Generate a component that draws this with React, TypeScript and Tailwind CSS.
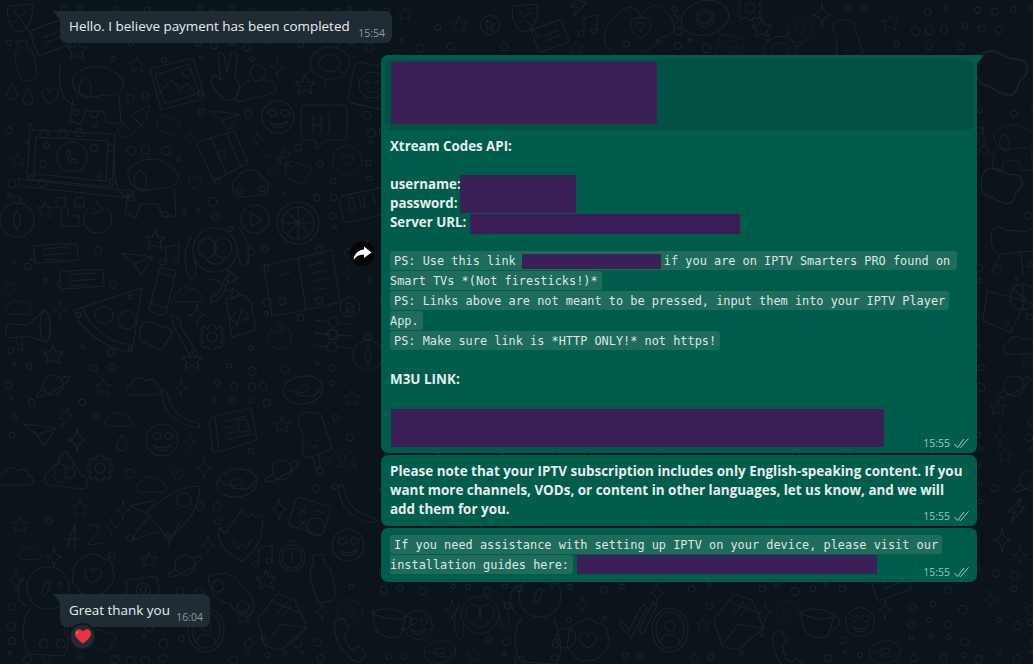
import React from 'react'

type DoodleKind = keyof typeof shapes

const shapes = {
  star: <path d="M0-10 3-3 10-3 5 2 7 9 0 5-7 9-5 2-10-3-3-3Z" />,
  heart: <path d="M0 8C-10 1-10-7-4-7-2-7-1-6 0-3 1-6 2-7 4-7 10-7 10 1 0 8Z" />,
  spark: <path d="M0-12C1-4 3-1 9 0 3 1 1 4 0 12-1 4-3 1-9 0-3-1-1-4 0-12Z" />,
  cloud: <path d="M-13 8C-21 8-21-3-13-3-12-11-2-11 0-6 4-10 12-7 11-1 18 0 17 8 10 8Z" />,
  drop: <path d="M0-8C4-2 5 1 5 3 5 9-5 9-5 3-5 1-4-2 0-8Z" />,
  bolt: <path d="M5-12-8 2-1 2-5 12 9-3 2-3Z" />,
  face: (
    <>
      <circle r="16" />
      <path d="M-9-3C-12-7-6-9-5-6-3-9 1-6-2-2L-6 0ZM3-3C1-7 6-9 7-6 10-8 13-5 10-2L6 0ZM-8 5C-3 9 4 9 9 4 8 13-6 13-8 5Z" />
    </>
  ),
  planet: (
    <>
      <circle r="10" />
      <path d="M-9 4C-17 8-19 12-15 12-10 12 12 2 16-6 18-10 14-10 9-7" />
    </>
  ),
  donut: (
    <>
      <ellipse rx="20" ry="14" transform="rotate(-8)" />
      <ellipse rx="6" ry="3.5" cy="-1" transform="rotate(-8)" />
      <path d="M-17-2C-13 3-9 0-5 4-1 8 4 4 8 6 12 7 15 2 19-3" />
    </>
  ),
  chat: (
    <>
      <path d="M-23-8-22 9-3 8 21 6 20-10-1-10ZM-23 0-27 6-22 7" />
      <path d="M-14-5 12-7M-14 1 12-1M-12 6 4 5" />
    </>
  ),
  laptop: (
    <>
      <path d="M-40-35-43 14 42 22 45-31 Z" />
      <path d="M-34-28-36 9 36 16 38-24Z" />
      <path d="M-52 14-50 21 60 33 64 26 42 24-43 15Z" />
      <circle cx="2" cy="-8" r="15" />
      <path d="M-4-12C-3-4 2 0 8-3L5-6 3-5C0-6-1-8-1-11L1-12-1-15Z" />
    </>
  ),
  dog: (
    <>
      <path d="M-35-20C-38 10-28 18-20 20M-22 -6C-16-20 10-25 25-8 34 0 25 12 8 10-12 16-24 6-22-6Z" />
      <path d="M-10-8C-18-4-18 12-8 14-2 12-2-4-10-8ZM-22 14-25 36-14 40-10 26 8 26 12 38 26 38 24 10" />
    </>
  ),
  frame: (
    <>
      <path d="M-25-15 18-26 30 14-14 26ZM-20-9 14-20 24 9-10 20Z" />
      <path d="M-16 10-4-4 6 5 12-1 20 8" />
      <circle cx="12" cy="-11" r="4" />
    </>
  ),
  peace: <path d="M-8 10C-16 2-16-4-10-7L-4-2-7-26C-7-30-2-30-1-26L2-10 6-28C8-31 13-29 12-24L10-4C17 2 15 14 8 18 2 20-4 16-8 10Z" />,
  person: (
    <>
      <circle cy="-12" r="8" />
      <path d="M-8-5C-22 2-24 14-20 17L16 8C22 2 14-5 7-5" />
    </>
  ),
  turtle: (
    <>
      <ellipse rx="21" ry="17" />
      <ellipse rx="11" ry="9" />
      <path d="M-20 8-28 12M21-5 30-8M-4 17-6 26M8-16 12-24M-9-7-17-13M9 7 16 13" />
    </>
  ),
  square: (
    <>
      <rect x="-21" y="-20" width="42" height="42" rx="6" transform="rotate(12)" />
      <circle r="13" />
      <path d="M-7-4-2-2M3-2 8-4M-6 4C-2 9 5 9 8 3" />
    </>
  ),
  play: (
    <>
      <circle r="14" />
      <path d="M-5-7 7 1-4 7Z" />
    </>
  ),
  bubble: (
    <>
      <path d="M-21-20 21-20C24-20 24 15 21 15L1 15-8 25-9 15-21 15C-24 15-24-20-21-20Z" />
      <path d="M-11-8-11 8M-3-8-3 8M-11 0-3 0M5-8 5 8M5-13 5-11" />
    </>
  ),
  pencil: <path d="M-22 8-4-10 15-20 10-2-10 18C-18 20-24 14-22 8ZM-16 2-3 14M-6-7 7 6" />,
  bottle: <path d="M-6-24 5-26 7-16C11-14 13-10 14-6L18 16C18 20 4 24 0 22-2 20-8-2-8-6-8-10-6-14-4-16Z" />,
  monkey: (
    <>
      <circle r="22" />
      <ellipse cx="-8" cy="-2" rx="9" ry="10" />
      <ellipse cx="8" cy="-2" rx="9" ry="10" />
      <path d="M-8 10C-2 16 6 16 10 8M-24-14C-32 0-32 22-24 28-16 30-20 10-20 8M24-22C36-8 36 12 30 16 22 18 26 0 18-12" />
    </>
  ),
  map: (
    <>
      <path d="M-26-12 12-24 26 8-8 26Z" />
      <path d="M-11-18 4 19M5-21 19 12" />
      <circle r="4" />
    </>
  ),
  car: (
    <>
      <path d="M-16 8-18-4C-16-8-14-8-12-9-10-20 10-20 12-9 18-8 19-2 17 7L6 9-8 10Z" />
      <circle cx="-10" cy="4" r="3" />
      <circle cx="12" cy="2" r="3" />
    </>
  ),
  clock: (
    <>
      <rect x="-21" y="-13" width="46" height="27" rx="5" transform="rotate(-12)" />
      <path d="M-14-7-12 7-7 6-9-8ZM-3-9-1 3 3 3 2-10M10-12 14 0" />
    </>
  ),
  lime: (
    <>
      <circle r="21" />
      <circle r="16" />
      <path d="M0-14V14M-14 0H14M-10-10 10 10M10-10-10 10" />
    </>
  ),
  book: (
    <>
      <path d="M-36-14-2-22 32-30 40 22 6 30-28 36Z" />
      <path d="M-2-22 6 30M8-14 24-18M10-6 26-10M12 2 28-2M14 10 26 8M-22-4-10-7" />
    </>
  ),
  compass: (
    <>
      <circle r="17" />
      <path d="M0-10 4 0 0 10-4 0Z" />
      <circle cy="-20" r="4" />
    </>
  ),
  qr: <path d="M-14-14H-5V-5H-14ZM5-14H14V-5H5ZM-9-4V14H9V4H-2V-4" />,
  refresh: <path d="M-10-7C-19 3-12 16 0 16 12 16 18 3 10-7M-3-17 5-7-6-3" />,
  music: <path d="M-6 8V-7L7-10V6M-6 8C-6 12-13 12-12 8-11 5-7 5-6 8ZM7 6C7 9 1 10 1 6 1 3 6 3 7 6Z" />,
  plane: <path d="M-16-8 16-4 4 14-3 3Z M-3 3 16-4" />,
  tube: <path d="M-2-24 14-20 4 22C0 26-12 22-13 18ZM-3-18 12-14M-12 12 3 17" />,
  arrows: <path d="M-14 12C-2 10-4-6 4-10L3-15 13-7 4-2 3-6C1 2 0 14-14 18ZM-16-6C-6-6-2-2 0 2M2 4 8 8 7 3 15 8 7 14 7 10" />,
  file: <path d="M-12-18 6-22 13-15 18 13-6 20ZM-3-4-8 2-1 6M7-6 11 0 4 4M4-9-1 9" />,
  pizza: (
    <>
      <path d="M-36-10 32-32 22 32C-4 30-30 10-36-10ZM-28-13C-22 4-2 22 16 24" />
      <circle cx="-6" cy="-5" r="9" />
      <circle cx="17" cy="0" r="9" />
    </>
  ),
  mega: (
    <>
      <path d="M-20-6-2-5 14-20C20-22 24 10 16 12L-2 6-20 8C-26 6-26-4-20-6ZM-14 8-11 20-7 20-9 7" />
      <ellipse cx="15" cy="-4" rx="5" ry="15" />
    </>
  ),
  blob: <path d="M-14-12C-6-16-2-8 6-8 14-8 16 0 10 4 6 8 8 16 0 14-8 12-10 8-14 8-20 6-20-8-14-12Z" />,
  brush: <path d="M-12-20C-4-20-2-12-2-8L14 18C16 24 8 24 6 20L-6-4C-10-6-10-14-12-20Z" />,
  gear: (
    <>
      <circle r="5" />
      <path d="M-3-12H3L4-8 8-10 11-7 9-3 12-2V3L9 4 11 8 8 11 4 9 3 12H-3L-4 9-8 11-11 8-9 4-12 3V-2L-9-3-11-7-8-10-4-8Z" />
    </>
  ),
  cursor: (
    <>
      <circle r="10" />
      <path d="M-4-5 5-1 1 1 4 6 2 7-1 3-3 6Z" />
    </>
  ),
  sliders: (
    <>
      <path d="M-18-8-5-6M6-5 18-4M-18 5-5 7M6 7 18 8" />
      <circle cx="0" cy="-6" r="5" />
      <circle cx="0" cy="7" r="5" />
    </>
  ),
  banana: <path d="M-18-20C-20-2-8 14 18 18 21 16 20 14 14 12-2 8-10-2-14-20Z" />,
  news: (
    <>
      <path d="M-18-14 18-22 24 10-14 22Z M-18-14-24-8-20 22-14 22" />
      <path d="M-10-8 14-14M-9-2 2-4M-8 4 2 2M-7 10 18 4" />
      <rect x="6" y="-8" width="10" height="12" rx="1" transform="rotate(-12)" />
    </>
  ),
  popsicle: <path d="M-12-20C-6-24 8-24 10-18L20 14 0 22-8 22C-12 10-6 2-12-8-14-10-14-16-12-20ZM1 22 4 34 8 32 7 20M-3 8-1 9M5 6 7 5M1 10C1 13 5 13 5 10" />,
  poop: <path d="M-18 10C-24 8-24 0-18-2-18-8-10-10-9-12-8-18-4-22 0-24 0-18 8-16 6-10 12-8 12-2 14 0 22 2 22 12 16 14ZM-12-2A6 6 0 1 0-2-2 6 6 0 1 0-12-2ZM-2-2A5 5 0 1 0 8-2 5 5 0 1 0-2-2Z" />,
  rocket: (
    <>
      <path d="M-12 0C10-18 28-24 40-24 40-10 34 8 14 24L8 28-12 4Z" />
      <circle cx="24" cy="-10" r="7" />
      <path d="M-12 4-30-4-4-10M10 26 8 36 20 12M-12 8C-20 14-24 24-28 30-18 28-12 24-2 22" />
    </>
  ),
  flame: <path d="M0 26C-20 16-26 4-22-8-20-2-16 0-14-4-12-14-4-16 0-26 2-18 8-16 10-22 14-14 18-22 20-20 22-4 18 14 0 26ZM-10 4-4 14 0 8 4 14 10 4" />,
  dice: (
    <>
      <rect x="-18" y="-14" width="36" height="30" rx="4" transform="rotate(18)" />
      <circle cx="6" cy="12" r="9" />
      <path d="M-10-6-4-2M-4-8-10 0M-10 6-4 10M-4 4-10 12M6-4 14-2" />
    </>
  ),
  flower: (
    <>
      <path d="M-6-19C0-24 6-20 10-16 18-18 20-8 20-4 24 4 18 10 14 13 12 20 4 21 0 20-6 24-14 18-15 13-22 10-22 2-19-3-22-10-12-18-6-19Z" />
      <path d="M0 8C-11 2-10-7-4-7-2-7-1-6 0-3 1-6 2-7 4-7 10-7 11 2 0 8Z" />
    </>
  ),
  watch: (
    <>
      <circle r="13" />
      <circle r="10" />
      <path d="M0-5 1 5M-4-17 5-17" />
    </>
  ),
  glasses: (
    <>
      <path d="M-22-18C-12-24 4-22 8-14L20 0C26 8 24 20 16 22 8 20 2 14 0 8-10 8-20 2-22-18Z" />
      <circle cx="-12" cy="-9" r="6" />
      <circle cx="13" cy="12" r="6" />
    </>
  ),
  envelope: (
    <>
      <path d="M-26 0-6-26 12-20 24 8-2 30-18 26ZM-10-18 20-6M-18 26-2 4 24 8" />
      <path d="M-6-6 4-18M0-4 8-14" />
    </>
  ),
  camera: (
    <>
      <rect x="-16" y="-12" width="32" height="26" rx="4" transform="rotate(-8)" />
      <circle r="7" />
      <circle r="3" />
    </>
  ),
  astro: (
    <>
      <circle cy="-22" r="21" />
      <ellipse cx="-2" cy="-22" rx="3" ry="8" transform="rotate(20 -2 -22)" />
      <path d="M-24-32C-32-24-32-10-22-4M-18 0C-28 8-26 40-18 44L16 46C24 36 20 16 14 2" />
      <circle cx="26" cy="20" r="10" />
    </>
  ),
  phone: <path d="M-10-20C-16-16-12 12 10 22 14 22 20 16 18 12L12 6 6 10C0 8-2 0-2-6L2-12-4-22Z" />,
  cup: <path d="M-20-8C-8-14 10-10 14-4L8 16C2 20-12 16-16 10ZM14-4C24-4 20 10 10 10M-20-8C-14-2 8 2 14-4" />,
  profile: (
    <>
      <ellipse rx="18" ry="22" />
      <ellipse rx="14" ry="18" />
      <circle cy="-4" r="5" />
      <path d="M-10 12C-6 2 6 2 10 12" />
    </>
  ),
  checks: <path d="M-14 2-6 12 8-14 12-10-4 20-16 6ZM4 12 18-16 22-12 8 16Z" />,
  chair: <path d="M-24-4C-24-14-14-14-10-10L14-8C20-20 30-16 30-12V10L-14 14C-20 14-24 8-24-4ZM-14 14-24 32M6 12 8 36M18 12 32 32" />,
  lemon: (
    <>
      <path d="M-18-14 20-4 6 28-22 16Z" />
      <circle cx="18" cy="-8" r="13" />
      <path d="M8-16 28 0M18-20V4" />
    </>
  ),
  hands: (
    <>
      <path d="M-36 30C-48 10-28-8-14-16-6-18 2-10 0-4-14-8-12 12 0 18 14 14 18-8 2-4 2-14 14-22 24-16 36-8 42 6 34 14L22 18C16 32 4 30 0 40-10 44-24 42-36 30Z" />
      <path d="M0 10C-6 6-6 0-2 0L0 2 2 0C6 0 6 6 0 10Z" />
    </>
  ),
  eye: (
    <>
      <ellipse rx="24" ry="17" transform="rotate(-14)" />
      <circle r="9" />
      <circle r="6" />
      <path d="M-32-4-26 0-32 8" />
    </>
  ),
  leaf: <path d="M-12-12 12-14C14 0 8 12 0 14-10 12-14 0-12-12ZM-6-8 14 20M0-2 7-6M-2 4-8 3" />,
  note: (
    <>
      <rect x="-15" y="-14" width="32" height="24" rx="2" transform="rotate(-20)" />
      <path d="M-6-2 8-8M-4 3 10-3" />
    </>
  ),
  digits: <path d="M-18 12-10-10-10 14M-20 4-4 4M2-8C10-14 16-8 12-2L2 10 18 8" />,
}

const doodles: [DoodleKind, number, number, number?][] = [
  ['leaf', 20, 18], ['bottle', 22, 62, 0.85], ['drop', 12, 92], ['drop', 28, 97], ['heart', 50, 96],
  ['note', 50, 40, 1.1], ['star', 77, 50], ['dog', 95, 85], ['star', 137, 65, 0.8], ['frame', 175, 84], ['peace', 225, 82], ['person', 258, 85],
  ['spark', 277, 67, 0.8], ['star', 305, 85], ['turtle', 330, 63, 0.95], ['square', 372, 85], ['face', 278, 117], ['bubble', 324, 125], ['plane', 225, 118, 0.9],
  ['blob', 170, 125, 0.7], ['pencil', 137, 122, 0.85], ['laptop', 70, 165], ['star', 18, 160, 0.7], ['map', 222, 155], ['spark', 190, 138, 0.6], ['spark', 257, 139, 0.6],
  ['dog', 150, 178], ['heart', 195, 182, 0.85], ['car', 250, 187], ['blob', 300, 172, 0.8], ['arrows', 280, 160, 0.8], ['flower', 347, 160, 0.7], ['clock', 362, 205],
  ['lime', 298, 223], ['play', 255, 219], ['monkey', 215, 250], ['book', 300, 280], ['compass', 17, 220], ['qr', 70, 212], ['refresh', 98, 217], ['star', 45, 210, 0.8],
  ['chat', 57, 254], ['chat', 83, 280], ['star', 155, 240], ['music', 172, 254], ['plane', 137, 261], ['tube', 162, 291], ['cloud', 190, 295, 0.85], ['arrows', 225, 285],
  ['file', 238, 317], ['pizza', 110, 320], ['mega', 30, 330], ['cloud', 20, 308, 0.8], ['brush', 183, 335], ['blob', 158, 335], ['gear', 212, 337], ['spark', 197, 315, 0.9],
  ['spark', 60, 310, 0.7], ['star', 53, 355], ['star', 192, 360], ['refresh', 280, 335, 0.85], ['sliders', 333, 328], ['sliders', 332, 340], ['cursor', 350, 307], ['compass', 368, 355, 0.9],
  ['spark', 348, 273, 0.6], ['heart', 10, 288, 0.7], ['planet', 53, 385], ['star', 103, 387, 0.8], ['cloud', 145, 387], ['spark', 181, 388, 0.7], ['banana', 180, 410], ['news', 233, 430],
  ['popsicle', 312, 435], ['donut', 303, 390], ['star', 352, 398, 0.8], ['face', 162, 440], ['plane', 40, 432], ['bolt', 65, 417, 0.8], ['spark', 77, 440], ['spark', 190, 442, 0.7], ['star', 282, 425, 0.8],
  ['cloud', 120, 420, 0.8], ['drop', 122, 443], ['cloud', 17, 477], ['poop', 67, 475], ['gear', 100, 468], ['rocket', 160, 510], ['cloud', 153, 485, 0.9], ['heart', 178, 475, 0.7], ['spark', 204, 468, 0.9],
  ['flame', 242, 535], ['donut', 237, 483], ['planet', 282, 470], ['eye', 342, 458, 0.5], ['banana', 357, 505], ['face', 348, 545], ['dice', 310, 515], ['digits', 85, 535],
  ['star', 80, 508, 0.8], ['spark', 123, 510, 0.8], ['star', 20, 525, 0.8], ['spark', 111, 527, 0.7], ['cloud', 31, 554, 0.7], ['spark', 54, 557, 0.9], ['spark', 208, 545, 0.8],
  ['spark', 279, 509, 0.9], ['planet', 185, 565], ['star', 149, 560, 0.8], ['watch', 292, 558], ['music', 265, 555], ['bottle', 318, 580], ['glasses', 230, 595], ['envelope', 283, 620], ['star', 266, 580],
  ['camera', 143, 590], ['flower', 93, 575], ['spark', 322, 612, 0.8], ['spark', 16, 580, 0.8], ['phone', 347, 640], ['flower', 350, 612, 0.6], ['astro', 48, 610], ['blob', 105, 640, 0.8], ['profile', 206, 630],
  ['star', 244, 617, 0.7], ['cup', 392, 620], ['monkey', 480, 615, 0.85], ['spark', 452, 610, 0.8], ['astro', 540, 618], ['flower', 588, 640], ['spark', 582, 605, 0.7], ['checks', 635, 618], ['profile', 670, 630],
  ['spark', 657, 593, 0.8], ['star', 703, 625, 0.7], ['envelope', 740, 620], ['spark', 765, 612, 0.8], ['phone', 785, 652], ['flower', 787, 612, 0.5], ['cup', 820, 620], ['face', 860, 622, 0.9], ['spark', 885, 610, 0.8],
  ['donut', 885, 652, 0.8], ['donut', 440, 652, 0.8], ['face', 418, 625, 0.9], ['star', 474, 655, 0.7], ['note', 890, 585, 1.1], ['spark', 990, 600, 0.8],
  ['cursor', 490, 25, 0.95], ['leaf', 525, 18], ['note', 550, 38], ['music', 590, 25], ['star', 459, 25, 0.8], ['star', 576, 48, 0.7], ['hands', 640, 22, 0.9], ['eye', 705, 18], ['gear', 750, 8],
  ['star', 762, 28], ['flower', 800, 30, 0.6], ['bolt', 578, 5], ['popsicle', 845, 40, 0.9], ['star', 890, 23, 0.8], ['spark', 822, 15], ['turtle', 780, 50, 0.8], ['square', 730, 48, 0.6], ['star', 405, 14, 0.7],
  ['blob', 1006, 72, 1.6], ['dog', 1012, 140, 0.8], ['blob', 1005, 185, 1.3], ['chair', 1015, 240], ['lemon', 1005, 305], ['cloud', 1022, 346], ['planet', 1014, 386], ['star', 998, 408, 0.8],
  ['spark', 1000, 437, 0.7], ['planet', 1030, 480], ['bolt', 1016, 510], ['spark', 1002, 540], ['spark', 1020, 555, 0.8], ['star', 1005, 455, 0.7], ['drop', 1008, 327, 0.7], ['gear', 1030, 360, 0.6],
]

// small bubbles between the doodles, seeded so the picture stays the same
const dots: [number, number, number][] = []
for (let gy = 6; gy < 664; gy += 17) {
  for (let gx = 6; gx < 1033; gx += 17) {
    const h = Math.abs(Math.sin(gx * 12.9898 + gy * 78.233) * 43758.5453) % 1
    const h2 = Math.abs(Math.sin(gx * 39.346 + gy * 11.135) * 24634.6345) % 1
    const x = gx + h * 9
    const y = gy + h2 * 9
    const clear = doodles.every(([, dx, dy, s = 1]) => Math.hypot(dx - x, dy - y) > 26 * s)
    if (clear && h > 0.25) dots.push([x, y, 1.6 + h2 * 2.8])
  }
}

const Wallpaper = () => (
  <svg
    className="absolute inset-0"
    width="1033"
    height="664"
    fill="none"
    stroke="#19232a"
    strokeWidth="1.1"
    strokeLinejoin="round"
    strokeLinecap="round"
  >
    {doodles.map(([kind, x, y, s = 1], i) => (
      <g key={i} transform={`translate(${x} ${y}) scale(${s})`}>
        {shapes[kind]}
      </g>
    ))}
    {dots.map(([x, y, r], i) => (
      <circle key={i} cx={x} cy={y} r={r} />
    ))}
  </svg>
)

const Ticks = () => (
  <svg width="16" height="11" viewBox="0 0 16 11" fill="none" stroke="#a3c7bf" strokeWidth="1" className="ml-[4px]">
    <path d="M0.5 6 3.500 9.500 10 1" />
    <path d="M5.500 9 6.500 9.500 14.500 0.500" />
  </svg>
)

const Meta = ({ time, out }: { time: string; out?: boolean }) => (
  <div
    className={[
      "absolute right-[7px] bottom-[3px] flex items-center font-['Open_Sans',sans-serif] text-[10.5px] leading-[14px] font-normal",
      out ? 'text-[#9fc5bc]' : 'text-[#8d9ba3]',
    ].join(' ')}
  >
    <span>{time}</span>
    {out && <Ticks />}
  </div>
)

const Redact = ({ className }: { className: string }) => <span className={`inline-block bg-[#3d1f57] ${className}`} />

const Chip = ({ children, pad }: { children: React.ReactNode; pad?: boolean }) => (
  <span
    className={[
      'flex h-[19px] items-center rounded-[3px] bg-[#1f6b5c] pt-[2px] pr-[4px] whitespace-pre',
      pad ? 'pl-[4px]' : 'rounded-l-none',
    ].join(' ')}
  >
    {children}
  </span>
)

const mono = "font-['DejaVu_Sans_Mono','Liberation_Mono',monospace] text-[11.9px] text-[#dbe8e4]"

const App: React.FC = () => {
  return (
    <div className="relative h-[664px] w-[1033px] overflow-hidden bg-[#0c141b] font-['Open_Sans','Noto_Sans',sans-serif] text-[#e9edef]">
      <Wallpaper />

      <div className="relative flex flex-col items-start pt-[11px] pr-[56px] pl-[60px]">
        {/* first incoming */}
        <div className="relative flex h-[32px] w-[332px] items-center rounded-[7px] rounded-tl-none bg-[#202c33] pb-[1px] pl-[9px] text-[13.45px]">
          <svg className="absolute top-0 -left-[7px]" width="8" height="10" viewBox="0 0 8 10">
            <path d="M0 0H8V10Z" fill="#202c33" />
          </svg>
          Hello. I believe payment has been completed
          <Meta time="15:54" />
        </div>

        {/* credentials */}
        <div className="relative mt-[12px] h-[398px] w-[596px] self-end rounded-[7px] rounded-tr-none bg-[#005c4b] p-[4px]">
          <svg className="absolute top-0 -right-[7px]" width="8" height="10" viewBox="0 0 8 10">
            <path d="M0 0H8L0 10Z" fill="#005c4b" />
          </svg>
          <div className="absolute top-[186px] -left-[31px] flex h-[25px] w-[25px] items-center justify-center rounded-full bg-[#040506]">
            <svg width="19" height="15" viewBox="0 0 19 15">
              <path d="M11 0.500 18.500 6.500 11 12 11 8.800C6 8.600 3 10.200 0.500 14 1 8.500 5 3.900 11 3.500Z" fill="#fff" />
            </svg>
          </div>

          <div className="h-[71px] rounded-[6px] bg-[#025144] pt-[3px] pl-[6px]">
            <Redact className="h-[62px] w-[266px]" />
          </div>

          <div className="pt-[7px] pl-[5px] text-[13.3px] leading-[19px] font-bold">
            <div className="h-[19px]">Xtream Codes API:</div>
            <div className="h-[19px]" />
            <div className="flex h-[19px] items-center">
              <span className="w-[70px]">username:</span>
              <Redact className="h-[19px] w-[116px]" />
            </div>
            <div className="flex h-[19px] items-center">
              <span className="w-[70px]">password:</span>
              <Redact className="h-[19px] w-[116px]" />
            </div>
            <div className="mt-[1px] flex h-[19px] items-center">
              <span className="-mt-[2px] w-[80px]">Server URL:</span>
              <Redact className="h-[20px] w-[270px]" />
            </div>
          </div>

          <div className={`mt-[18px] flex flex-col items-start gap-[1px] pl-[5px] ${mono}`}>
            <Chip pad>
              PS: Use this link <Redact className="mr-[3px] -ml-[1px] h-[15px] w-[139px]" />if you are on IPTV Smarters PRO found on
              <span className="w-[3px]" />
            </Chip>
            <Chip>Smart TVs *(Not firesticks!)*</Chip>
            <Chip pad>PS: Links above are not meant to be pressed, input them into your IPTV Player</Chip>
            <Chip>App.</Chip>
            <Chip pad>PS: Make sure link is *HTTP ONLY!* not https!</Chip>
          </div>

          <div className="mt-[20px] pl-[5px] text-[13.45px] leading-[19px] font-bold">M3U LINK:</div>
          <Redact className="mt-[20px] ml-[6px] h-[38px] w-[493px]" />
          <Meta time="15:55" out />
        </div>

        {/* language note */}
        <div className="relative mt-[2px] h-[71px] w-[596px] self-end rounded-[7px] bg-[#005c4b] pt-[7px] pl-[9px] text-[13.45px] leading-[19px] font-bold">
          <div className="h-[19px]">Please note that your IPTV subscription includes only English-speaking content. If you</div>
          <div className="h-[19px]">want more channels, VODs, or content in other languages, let us know, and we will</div>
          <div className="h-[19px]">add them for you.</div>
          <Meta time="15:55" out />
        </div>

        {/* guides */}
        <div className={`relative mt-[2px] flex h-[54px] w-[596px] flex-col items-start gap-[1px] self-end rounded-[7px] bg-[#005c4b] pt-[7px] pl-[9px] ${mono}`}>
          <Chip pad>If you need assistance with setting up IPTV on your device, please visit our</Chip>
          <div className="flex items-center">
            <Chip>installation guides here:</Chip>
            <Redact className="ml-[4px] h-[19px] w-[300px]" />
          </div>
          <Meta time="15:55" out />
        </div>

        {/* second incoming */}
        <div className="relative mt-[12px] flex h-[33px] w-[150px] items-center rounded-[7px] rounded-tl-none bg-[#202c33] pl-[9px] text-[13.45px]">
          <svg className="absolute top-0 -left-[7px]" width="8" height="10" viewBox="0 0 8 10">
            <path d="M0 0H8V10Z" fill="#202c33" />
          </svg>
          Great thank you
          <Meta time="16:04" />
          <div className="absolute top-[29px] left-[9px] flex h-[27px] w-[27px] items-center justify-center rounded-full border-2 border-[#10191f] bg-[#202c33]">
            <svg width="16" height="15" viewBox="0 0 16 15">
              <path d="M8 14.500C2 10 0 7.500 0 4.500 0 2 2 0.300 4 0.300 5.800 0.300 7.200 1.300 8 2.800 8.800 1.300 10.200 0.300 12 0.300 14 0.300 16 2 16 4.500 16 7.500 14 10 8 14.500Z" fill="#f0303f" />
              <path d="M3 2.500C2 3 1.700 4 1.800 5" stroke="#ff8b93" strokeWidth="1" fill="none" />
            </svg>
          </div>
        </div>
      </div>
    </div>
  )
}

export default App
